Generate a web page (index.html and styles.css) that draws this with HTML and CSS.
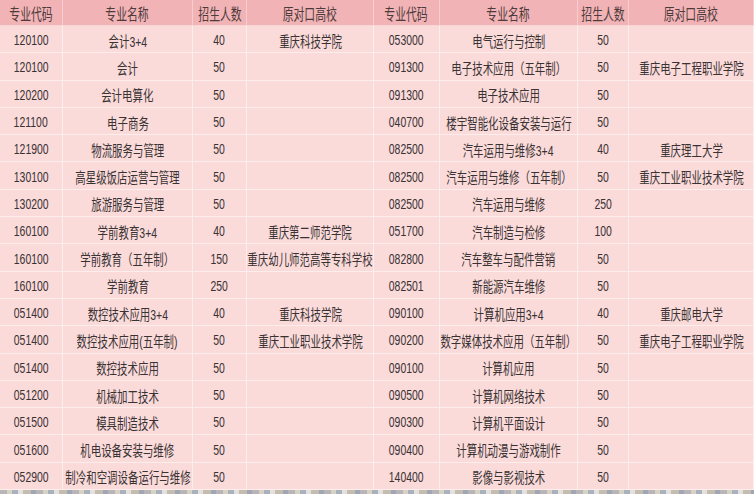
FILE: index.html
```html
<!DOCTYPE html>
<html lang="zh-CN">
<head>
<meta charset="utf-8">
<title>专业招生表</title>
<link rel="stylesheet" href="styles.css">
</head>
<body>
<div class="sheet">
  <div class="grid">
    <div class="c h"><span>专业代码</span></div><div class="c h"><span>专业名称</span></div><div class="c h"><span>招生人数</span></div><div class="c h"><span>原对口高校</span></div>
    <div class="c h"><span>专业代码</span></div><div class="c h"><span>专业名称</span></div><div class="c h"><span>招生人数</span></div><div class="c h"><span>原对口高校</span></div>

    <div class="c"><span>120100</span></div><div class="c"><span>会计3+4</span></div><div class="c"><span>40</span></div><div class="c"><span>重庆科技学院</span></div>
    <div class="c"><span>053000</span></div><div class="c"><span>电气运行与控制</span></div><div class="c"><span>50</span></div><div class="c"><span></span></div>

    <div class="c"><span>120100</span></div><div class="c"><span>会计</span></div><div class="c"><span>50</span></div><div class="c"><span></span></div>
    <div class="c"><span>091300</span></div><div class="c"><span>电子技术应用（五年制）</span></div><div class="c"><span>50</span></div><div class="c"><span>重庆电子工程职业学院</span></div>

    <div class="c"><span>120200</span></div><div class="c"><span>会计电算化</span></div><div class="c"><span>50</span></div><div class="c"><span></span></div>
    <div class="c"><span>091300</span></div><div class="c"><span>电子技术应用</span></div><div class="c"><span>50</span></div><div class="c"><span></span></div>

    <div class="c"><span>121100</span></div><div class="c"><span>电子商务</span></div><div class="c"><span>50</span></div><div class="c"><span></span></div>
    <div class="c"><span>040700</span></div><div class="c"><span>楼宇智能化设备安装与运行</span></div><div class="c"><span>50</span></div><div class="c"><span></span></div>

    <div class="c"><span>121900</span></div><div class="c"><span>物流服务与管理</span></div><div class="c"><span>50</span></div><div class="c"><span></span></div>
    <div class="c"><span>082500</span></div><div class="c"><span>汽车运用与维修3+4</span></div><div class="c"><span>40</span></div><div class="c"><span>重庆理工大学</span></div>

    <div class="c"><span>130100</span></div><div class="c"><span>高星级饭店运营与管理</span></div><div class="c"><span>50</span></div><div class="c"><span></span></div>
    <div class="c"><span>082500</span></div><div class="c"><span>汽车运用与维修（五年制）</span></div><div class="c"><span>50</span></div><div class="c"><span>重庆工业职业技术学院</span></div>

    <div class="c"><span>130200</span></div><div class="c"><span>旅游服务与管理</span></div><div class="c"><span>50</span></div><div class="c"><span></span></div>
    <div class="c"><span>082500</span></div><div class="c"><span>汽车运用与维修</span></div><div class="c"><span>250</span></div><div class="c"><span></span></div>

    <div class="c"><span>160100</span></div><div class="c"><span>学前教育3+4</span></div><div class="c"><span>40</span></div><div class="c"><span>重庆第二师范学院</span></div>
    <div class="c"><span>051700</span></div><div class="c"><span>汽车制造与检修</span></div><div class="c"><span>100</span></div><div class="c"><span></span></div>

    <div class="c"><span>160100</span></div><div class="c"><span>学前教育（五年制）</span></div><div class="c"><span>150</span></div><div class="c"><span>重庆幼儿师范高等专科学校</span></div>
    <div class="c"><span>082800</span></div><div class="c"><span>汽车整车与配件营销</span></div><div class="c"><span>50</span></div><div class="c"><span></span></div>

    <div class="c"><span>160100</span></div><div class="c"><span>学前教育</span></div><div class="c"><span>250</span></div><div class="c"><span></span></div>
    <div class="c"><span>082501</span></div><div class="c"><span>新能源汽车维修</span></div><div class="c"><span>50</span></div><div class="c"><span></span></div>

    <div class="c"><span>051400</span></div><div class="c"><span>数控技术应用3+4</span></div><div class="c"><span>40</span></div><div class="c"><span>重庆科技学院</span></div>
    <div class="c"><span>090100</span></div><div class="c"><span>计算机应用3+4</span></div><div class="c"><span>40</span></div><div class="c"><span>重庆邮电大学</span></div>

    <div class="c"><span>051400</span></div><div class="c"><span>数控技术应用(五年制)</span></div><div class="c"><span>50</span></div><div class="c"><span>重庆工业职业技术学院</span></div>
    <div class="c"><span>090200</span></div><div class="c"><span>数字媒体技术应用（五年制）</span></div><div class="c"><span>50</span></div><div class="c"><span>重庆电子工程职业学院</span></div>

    <div class="c"><span>051400</span></div><div class="c"><span>数控技术应用</span></div><div class="c"><span>50</span></div><div class="c"><span></span></div>
    <div class="c"><span>090100</span></div><div class="c"><span>计算机应用</span></div><div class="c"><span>50</span></div><div class="c"><span></span></div>

    <div class="c"><span>051200</span></div><div class="c"><span>机械加工技术</span></div><div class="c"><span>50</span></div><div class="c"><span></span></div>
    <div class="c"><span>090500</span></div><div class="c"><span>计算机网络技术</span></div><div class="c"><span>50</span></div><div class="c"><span></span></div>

    <div class="c"><span>051500</span></div><div class="c"><span>模具制造技术</span></div><div class="c"><span>50</span></div><div class="c"><span></span></div>
    <div class="c"><span>090300</span></div><div class="c"><span>计算机平面设计</span></div><div class="c"><span>50</span></div><div class="c"><span></span></div>

    <div class="c"><span>051600</span></div><div class="c"><span>机电设备安装与维修</span></div><div class="c"><span>50</span></div><div class="c"><span></span></div>
    <div class="c"><span>090400</span></div><div class="c"><span>计算机动漫与游戏制作</span></div><div class="c"><span>50</span></div><div class="c"><span></span></div>

    <div class="c"><span>052900</span></div><div class="c"><span>制冷和空调设备运行与维修</span></div><div class="c"><span>50</span></div><div class="c"><span></span></div>
    <div class="c"><span>140400</span></div><div class="c"><span>影像与影视技术</span></div><div class="c"><span>50</span></div><div class="c"><span></span></div>
  </div>
  <div class="strip"></div>
</div>
</body>
</html>
```

FILE: styles.css
```css
html, body {
  margin: 0;
  padding: 0;
  background: #fbdada;
}
.sheet {
  width: 754px;
  height: 494px;
  overflow: hidden;
  display: flex;
  flex-direction: column;
}
.grid {
  display: grid;
  grid-template-columns: 63px 130px 54px 127px 66px 138px 51px 125px;
  grid-template-rows: 26px repeat(17, 27.3px);
  background: #fbdada;
}
.c {
  display: flex;
  align-items: center;
  justify-content: center;
  box-sizing: border-box;
  padding-top: 2px;
  border-right: 1px solid #fdeeee;
  border-bottom: 1px solid #fdeeee;
  overflow: visible;
  min-width: 0;
  font-family: "Liberation Sans", "Noto Sans CJK SC", sans-serif;
  font-size: 14.5px;
  color: #383232;
  white-space: nowrap;
}
.c span {
  display: inline-block;
  flex: none;
  transform: scaleX(0.72);
}
.h {
  padding-top: 0;
  background: #f1b3b6;
  color: #4d3a3a;
  font-size: 15.5px;
  border-right-color: #f7cdd0;
  border-bottom-color: #f7d6d8;
}
.h span {
  transform: scaleX(0.7);
}
.strip {
  flex: 1;
  background:
    repeating-linear-gradient(90deg, #b9b4b8 0 7px, #d8d2c4 7px 12px, #a9b1bd 12px 18px, #e4e0e0 18px 23px, #c4bcae 23px 31px, #9fa7b2 31px 36px);
}
```
